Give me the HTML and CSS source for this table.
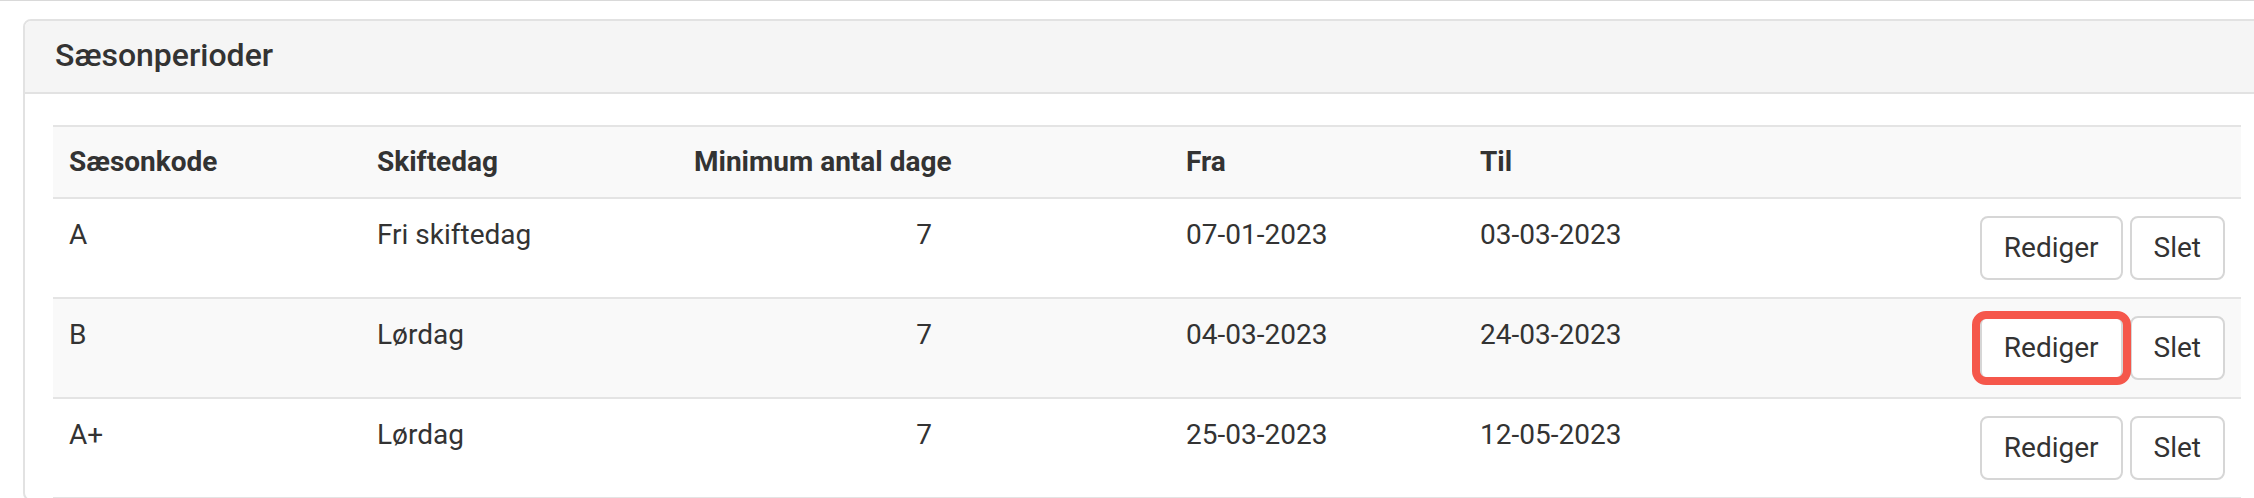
FILE: index.html
```html
<!DOCTYPE html>
<html lang="da">
<head>
<meta charset="utf-8">
<title>Sæsonperioder</title>
<link rel="stylesheet" href="styles.css">
</head>
<body>
<div class="topline"></div>
<div class="panel">
  <div class="panel-heading">Sæsonperioder</div>
  <div class="panel-body">
    <table class="tbl">
      <colgroup>
        <col class="c1"><col class="c2"><col class="c3"><col class="c4"><col class="c5"><col class="c6">
      </colgroup>
      <thead>
        <tr>
          <th>Sæsonkode</th>
          <th>Skiftedag</th>
          <th>Minimum antal dage</th>
          <th>Fra</th>
          <th>Til</th>
          <th></th>
        </tr>
      </thead>
      <tbody>
        <tr>
          <td>A</td>
          <td>Fri skiftedag</td>
          <td class="num">7</td>
          <td>07-01-2023</td>
          <td>03-03-2023</td>
          <td class="actions"><div class="btns"><span class="btn-wrap"><button class="btn">Rediger</button></span><button class="btn">Slet</button></div></td>
        </tr>
        <tr class="alt">
          <td>B</td>
          <td>Lørdag</td>
          <td class="num">7</td>
          <td>04-03-2023</td>
          <td>24-03-2023</td>
          <td class="actions"><div class="btns"><span class="btn-wrap"><button class="btn">Rediger</button><span class="highlight"></span></span><button class="btn">Slet</button></div></td>
        </tr>
        <tr>
          <td>A+</td>
          <td>Lørdag</td>
          <td class="num">7</td>
          <td>25-03-2023</td>
          <td>12-05-2023</td>
          <td class="actions"><div class="btns"><span class="btn-wrap"><button class="btn">Rediger</button></span><button class="btn">Slet</button></div></td>
        </tr>
      </tbody>
    </table>
  </div>
</div>
</body>
</html>
```

FILE: styles.css
```css
html, body {
  margin: 0;
  padding: 0;
  overflow: hidden;
  background: #ffffff;
}

body {
  font-family: Roboto, "Liberation Sans", sans-serif;
  color: #333333;
  width: 2254px;
  height: 498px;
}

.topline {
  height: 1px;
  background: #d9d9d9;
}

.panel {
  margin: 18px 0 0 23px;
  width: 2248px;
  box-sizing: border-box;
  border: 2px solid #e2e2e2;
  border-radius: 8px;
  background: #ffffff;
}

.panel-heading {
  background: #f5f5f5;
  border-bottom: 2px solid #e2e2e2;
  border-radius: 6px 6px 0 0;
  padding: 17px 30px 19px 30px;
  font-size: 32px;
  line-height: 35px;
  font-weight: 500;
  color: #333333;
}

.panel-body {
  padding: 31px 28px 0 28px;
}

.tbl {
  width: 2188px;
  table-layout: fixed;
  border-collapse: collapse;
  border-spacing: 0;
  font-size: 28px;
}

.c1 { width: 308px; }
.c2 { width: 317px; }
.c3 { width: 492px; }
.c4 { width: 294px; }
.c5 { width: 497px; }
.c6 { width: 280px; }

.tbl th {
  text-align: left;
  font-weight: 700;
  line-height: 38px;
  padding: 16px 16px;
  background: #f9f9f9;
  border-top: 2px solid #e4e4e4;
  border-bottom: 2px solid #e4e4e4;
  white-space: nowrap;
}

.tbl td {
  vertical-align: top;
  line-height: 38px;
  padding: 17px 16px;
  border-bottom: 2px solid #e4e4e4;
  white-space: nowrap;
}

.tbl tr.alt td {
  background: #f9f9f9;
}

.tbl td.num {
  text-align: center;
}

.tbl td.actions {
  text-align: right;
}

.btns {
  display: flex;
  justify-content: flex-end;
  gap: 7px;
}

.btn-wrap {
  position: relative;
  display: inline-flex;
}

.btn {
  font-family: Roboto, "Liberation Sans", sans-serif;
  font-size: 28px;
  line-height: 38px;
  color: #333333;
  background: #ffffff;
  border: 2px solid #d6d6d6;
  border-radius: 8px;
  padding: 11px 22px;
  margin: 0;
}

.highlight {
  position: absolute;
  left: -8px;
  right: -8px;
  top: -5px;
  bottom: -5px;
  border: 8px solid #f5574b;
  border-radius: 14px;
  z-index: 2;
  pointer-events: none;
}
```
